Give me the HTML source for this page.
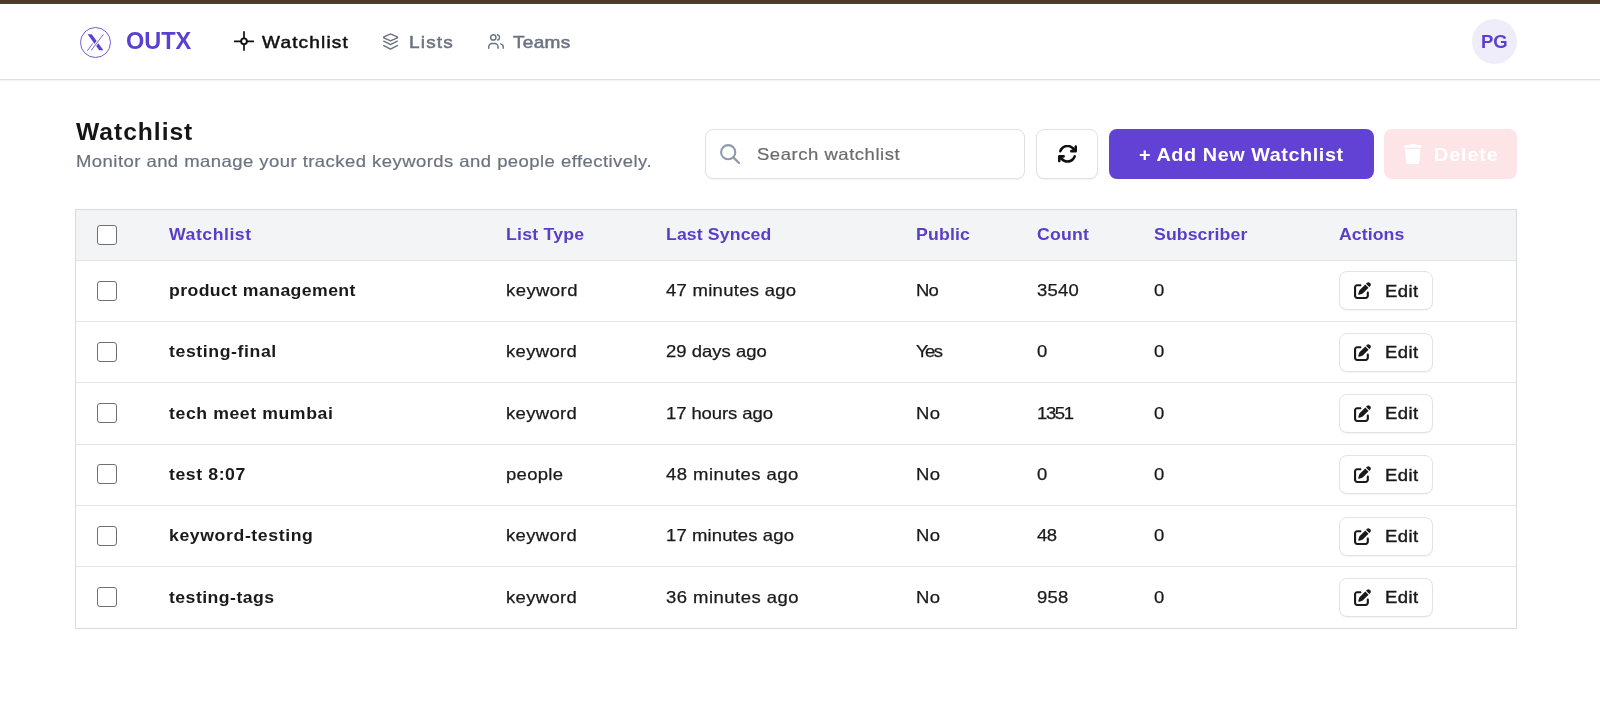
<!DOCTYPE html>
<html><head><meta charset="utf-8"><style>
*{box-sizing:border-box;margin:0;padding:0}
html,body{width:1600px;height:714px;overflow:hidden;background:#fff;font-family:"Liberation Sans",sans-serif;color:#1a1a1a}
.a{position:absolute;white-space:nowrap;line-height:1;will-change:transform}
.topbar{position:absolute;left:0;top:0;width:1600px;height:4px;background:linear-gradient(#533826 0,#523826 50%,#4d3e33 50%,#4d3f34 100%)}
.header{position:absolute;left:0;top:0;width:1600px;height:80px;border-bottom:1px solid #dedede;box-shadow:0 1px 2px rgba(0,0,0,0.06)}
.nav{font-size:17px;font-weight:normal;-webkit-text-stroke:0.5px currentColor}
.th{font-size:16.5px;font-weight:bold;color:#5a3dc8}
.td{font-size:16.5px;color:#1a1a1a;-webkit-text-stroke:0.25px #1a1a1a}
.tdb{font-size:16.5px;font-weight:bold;color:#1a1a1a}
.cb{position:absolute;left:97px;width:20px;height:20px;border:1.5px solid #707070;border-radius:3px;background:#fff}
.edit{position:absolute;left:1339px;width:94px;height:39px;border:1px solid #e3e3e3;border-radius:8px;background:#fff;box-shadow:0 1px 1.5px rgba(0,0,0,0.05)}
.rowline{position:absolute;left:76px;width:1440px;height:1px;background:#e3e4e8}
</style></head><body>
<div class="header"></div><div class="topbar"></div>
<svg class="a" style="left:79.5px;top:26.5px" width="31" height="31" viewBox="0 0 31 31">
<circle cx="15.5" cy="15.5" r="15" fill="none" stroke="#5b3fd0" stroke-width="0.95" opacity="0.9"/>
<path d="M7.6 7.2 L11.8 7.2 L23.4 23.3 L19.2 23.3 Z" fill="#5b3fd0"/>
<path d="M23.4 7.4 L11.2 23.4" stroke="#fff" stroke-width="2.6"/>
<path d="M23.4 7.4 L11.2 23.4 M12.8 16.4 L7.4 23.7" stroke="#5b3fd0" stroke-width="0.8"/>
</svg>
<div id="brand" class="a " style="left:125.5px;top:30.0px;letter-spacing:0px;transform:scaleX(1);transform-origin:0 0;font-size:23.5px;font-weight:bold;color:#5b3fd0">OUTX</div>
<svg class="a" style="left:234px;top:31px" width="20" height="20" viewBox="0 0 20 20"><circle cx="10" cy="10.3" r="2.9" fill="none" stroke="#111" stroke-width="1.9"/><path d="M10 0.3V7.3M10 13.3V19.8M0 10.3H7M13 10.3H20" stroke="#111" stroke-width="1.7"/></svg>
<div id="nav1" class="a nav" style="left:262px;top:33.8px;letter-spacing:1.028px;transform:scaleX(1.12);transform-origin:0 0;color:#111">Watchlist</div>
<svg class="a" style="left:383.3px;top:32.5px" width="16" height="17" viewBox="0 0 16 17"><g fill="none" stroke="#6b7280" stroke-width="1.45" stroke-linecap="round" stroke-linejoin="round"><path d="M7.1 1.05a1 1 0 0 1 .9 0L14.3 3.9a.5 .5 0 0 1 0 .9L8 7.7a1 1 0 0 1-.9 0L.9 4.8a.5 .5 0 0 1 0-.9Z"/><path d="M.8 8.2L7.1 11.4a1 1 0 0 0 .9 0L14.3 8.2"/><path d="M.8 12.6L7.1 15.8a1 1 0 0 0 .9 0L14.3 12.6"/></g></svg>
<div id="nav2" class="a nav" style="left:409px;top:33.8px;letter-spacing:1.045px;transform:scaleX(1.12);transform-origin:0 0;color:#6b7280">Lists</div>
<svg class="a" style="left:488px;top:34px" width="16" height="16" viewBox="0 0 16 16"><g fill="none" stroke="#6b7280" stroke-width="1.45" stroke-linecap="round" stroke-linejoin="round"><circle cx="5.3" cy="3.4" r="2.65"/><path d="M9.6 0.8a2.7 2.7 0 0 1 0 5.2"/><path d="M0.75 14.3V12.9a3.4 3.4 0 0 1 3.4-3.4h2.5a3.4 3.4 0 0 1 3.4 3.4V14.3"/><path d="M12.6 9.9a3 3 0 0 1 2.6 3V14.3"/></g></svg>
<div id="nav3" class="a nav" style="left:513px;top:33.8px;letter-spacing:0.239px;transform:scaleX(1.12);transform-origin:0 0;color:#6b7280">Teams</div>
<div class="a" style="left:1471.8px;top:19px;width:44.5px;height:44.5px;border-radius:50%;background:#efedf9"></div>
<div id="pg" class="a " style="left:1481.1px;top:32.9px;letter-spacing:0px;transform:scaleX(1);transform-origin:0 0;font-size:18.5px;font-weight:bold;color:#5b3fd0">PG</div>
<div id="title" class="a " style="left:76px;top:120.5px;letter-spacing:0.915px;transform:scaleX(1.07);transform-origin:0 0;font-size:23px;font-weight:bold;color:#151515">Watchlist</div>
<div id="sub" class="a " style="left:76px;top:153px;letter-spacing:0.407px;transform:scaleX(1.12);transform-origin:0 0;font-size:16.5px;color:#6b7280;-webkit-text-stroke:0.2px #6b7280">Monitor and manage your tracked keywords and people effectively.</div>
<div class="a" style="left:705px;top:129px;width:320px;height:50px;border:1px solid #e1e1e1;border-radius:8px;background:#fff;box-shadow:0 1px 1.5px rgba(0,0,0,0.05)"></div>
<svg class="a" style="left:719px;top:143px" width="22" height="22" viewBox="0 0 22 22"><circle cx="9.2" cy="9.2" r="7.1" fill="none" stroke="#8e9aab" stroke-width="2.1"/><path d="M14.6 14.6L20 20" stroke="#8e9aab" stroke-width="2.3" stroke-linecap="round"/></svg>
<div id="ph" class="a " style="left:757px;top:146px;letter-spacing:0.48px;transform:scaleX(1.12);transform-origin:0 0;font-size:16.5px;color:#6b6b6b;-webkit-text-stroke:0.2px #6b6b6b">Search watchlist</div>
<div class="a" style="left:1036px;top:129px;width:62px;height:50px;border:1px solid #e1e1e1;border-radius:8px;background:#fff;box-shadow:0 1px 1.5px rgba(0,0,0,0.05)"></div>
<svg class="a" style="left:1057.5px;top:145px" width="19" height="17.5" viewBox="16 40 480 432" preserveAspectRatio="none"><path fill="#111" d="M105.1 202.6c7.7-21.8 20.2-42.3 37.8-59.8c62.5-62.5 163.8-62.5 226.3 0L386.3 160H352c-17.7 0-32 14.3-32 32s14.3 32 32 32H463.5c0 0 0 0 0 0h.4c17.7 0 32-14.3 32-32V80c0-17.7-14.3-32-32-32s-32 14.3-32 32v35.2L414.4 97.6c-87.5-87.5-229.3-87.5-316.8 0C73.2 122 55.6 150.7 44.8 181.4c-5.9 16.7 2.9 34.9 19.5 40.8s34.9-2.9 40.8-19.5zM39 289.3c-5 1.5-9.8 4.200-13.7 8.2c-4 4-6.7 8.8-8.1 14c-.3 1.2-.6 2.5-.8 3.8c-.3 1.7-.4 3.4-.4 5.1V432c0 17.7 14.3 32 32 32s32-14.3 32-32V396.9l17.6 17.5 0 0c87.5 87.4 229.3 87.4 316.7 0c24.4-24.4 42.1-53.1 52.900-83.7c5.9-16.7-2.9-34.9-19.5-40.8s-34.9 2.9-40.8 19.5c-7.7 21.8-20.2 42.3-37.8 59.8c-62.5 62.5-163.8 62.5-226.3 0l-.1-.1L125.6 352H160c17.7 0 32-14.3 32-32s-14.3-32-32-32H48.4c-1.6 0-3.2 .1-4.8 .3s-3.1 .5-4.6 1z"/></svg>
<div class="a" style="left:1108.5px;top:129px;width:264.5px;height:49.5px;border-radius:8px;background:#6142d4"></div>
<div id="add" class="a " style="left:1138.9px;top:145.9px;letter-spacing:0.538px;transform:scaleX(1.07);transform-origin:0 0;font-size:18.5px;font-weight:bold;color:#fff">+ Add New Watchlist</div>
<div class="a" style="left:1383.5px;top:129px;width:133px;height:49.5px;border-radius:8px;background:#fde4e6"></div>
<svg class="a" style="left:1404px;top:144px" width="17.5" height="20" viewBox="0 0 448 512" preserveAspectRatio="none"><path fill="#fff" d="M135.2 17.7L128 32H32C14.3 32 0 46.3 0 64S14.3 96 32 96H416c17.7 0 32-14.3 32-32s-14.3-32-32-32H320l-7.2-14.3C307.4 6.8 296.3 0 284.2 0H163.8c-12.1 0-23.2 6.8-28.6 17.7zM416 128H32L53.2 467c1.6 25.3 22.6 45 47.9 45H346.9c25.3 0 46.3-19.7 47.9-45L416 128z"/></svg>
<div id="del" class="a " style="left:1433.7px;top:145.9px;letter-spacing:0.809px;transform:scaleX(1.07);transform-origin:0 0;font-size:18.5px;font-weight:bold;color:#fff">Delete</div>
<div class="a" style="left:75px;top:209px;width:1442px;height:420px;border:1px solid #d9dbde;background:#fff"></div>
<div class="a" style="left:76px;top:210px;width:1440px;height:50px;background:#f3f4f6"></div>
<div class="rowline" style="top:259.5px;background:#e1e3e7"></div>
<div class="cb" style="top:225px"></div>
<div id="th0" class="a th" style="left:169px;top:226.29999999999998px;letter-spacing:0.494px;transform:scaleX(1.07);transform-origin:0 0;">Watchlist</div>
<div id="th1" class="a th" style="left:506px;top:226.29999999999998px;letter-spacing:0.222px;transform:scaleX(1.07);transform-origin:0 0;">List Type</div>
<div id="th2" class="a th" style="left:666px;top:226.29999999999998px;letter-spacing:0.123px;transform:scaleX(1.07);transform-origin:0 0;">Last Synced</div>
<div id="th3" class="a th" style="left:916px;top:226.29999999999998px;letter-spacing:0.173px;transform:scaleX(1.07);transform-origin:0 0;">Public</div>
<div id="th4" class="a th" style="left:1037px;top:226.29999999999998px;letter-spacing:0.227px;transform:scaleX(1.07);transform-origin:0 0;">Count</div>
<div id="th5" class="a th" style="left:1154px;top:226.29999999999998px;letter-spacing:0.106px;transform:scaleX(1.07);transform-origin:0 0;">Subscriber</div>
<div id="th6" class="a th" style="left:1339px;top:226.29999999999998px;letter-spacing:0.083px;transform:scaleX(1.07);transform-origin:0 0;">Actions</div>
<div class="cb" style="top:280.50px"></div>
<div id="r0c0" class="a tdb" style="left:169px;top:282.0px;letter-spacing:0.38px;transform:scaleX(1.07);transform-origin:0 0;">product management</div>
<div id="r0c1" class="a td" style="left:506px;top:282.0px;letter-spacing:0.394px;transform:scaleX(1.12);transform-origin:0 0;">keyword</div>
<div id="r0c2" class="a td" style="left:666px;top:282.0px;letter-spacing:0.252px;transform:scaleX(1.12);transform-origin:0 0;">47 minutes ago</div>
<div id="r0c3" class="a td" style="left:916px;top:282.0px;letter-spacing:-0.714px;transform:scaleX(1.12);transform-origin:0 0;">No</div>
<div id="r0c4" class="a td" style="left:1037px;top:282.0px;letter-spacing:0.212px;transform:scaleX(1.12);transform-origin:0 0;">3540</div>
<div id="r0c5" class="a td" style="left:1154px;top:282.0px;letter-spacing:0.286px;transform:scaleX(1.12);transform-origin:0 0;">0</div>
<div class="edit" style="top:271.20px"><svg width="17" height="17" viewBox="0 0 512 512" style="position:absolute;left:14px;top:10.3px"><path fill="#1a1a1a" d="M471.6 21.7c-21.9-21.9-57.3-21.9-79.2 0L362.3 51.7l97.9 97.9 30.1-30.1c21.9-21.9 21.9-57.3 0-79.2L471.6 21.7zm-299.2 220c-6.1 6.1-10.8 13.6-13.5 21.9l-29.6 88.8c-2.9 8.6-.6 18.1 5.8 24.6s15.9 8.7 24.6 5.8l88.8-29.6c8.2-2.7 15.7-7.4 21.9-13.5L437.7 172.3 339.7 74.3 172.4 241.7zM96 64C43 64 0 107 0 160V416c0 53 43 96 96 96H352c53 0 96-43 96-96V320c0-17.7-14.3-32-32-32s-32 14.3-32 32v96c0 17.7-14.3 32-32 32H96c-17.7 0-32-14.3-32-32V160c0-17.7 14.3-32 32-32h96c17.7 0 32-14.3 32-32s-14.3-32-32-32H96z"/></svg></div>
<div id="r0e" class="a td" style="left:1385.0px;top:282.6px;letter-spacing:0.394px;transform:scaleX(1.12);transform-origin:0 0;-webkit-text-stroke:0.4px #1a1a1a">Edit</div>
<div class="rowline" style="top:321.13px"></div>
<div class="cb" style="top:341.83px"></div>
<div id="r1c0" class="a tdb" style="left:169px;top:343.33px;letter-spacing:0.561px;transform:scaleX(1.07);transform-origin:0 0;">testing-final</div>
<div id="r1c1" class="a td" style="left:506px;top:343.33px;letter-spacing:0.28593628593604264px;transform:scaleX(1.12);transform-origin:0 0;">keyword</div>
<div id="r1c2" class="a td" style="left:666px;top:343.33px;letter-spacing:0.014px;transform:scaleX(1.12);transform-origin:0 0;">29 days ago</div>
<div id="r1c3" class="a td" style="left:916px;top:343.33px;letter-spacing:-1.377px;transform:scaleX(1.12);transform-origin:0 0;">Yes</div>
<div id="r1c4" class="a td" style="left:1037px;top:343.33px;letter-spacing:0.28593628593604264px;transform:scaleX(1.12);transform-origin:0 0;">0</div>
<div id="r1c5" class="a td" style="left:1154px;top:343.33px;letter-spacing:0.28593628593604264px;transform:scaleX(1.12);transform-origin:0 0;">0</div>
<div class="edit" style="top:332.53px"><svg width="17" height="17" viewBox="0 0 512 512" style="position:absolute;left:14px;top:10.3px"><path fill="#1a1a1a" d="M471.6 21.7c-21.9-21.9-57.3-21.9-79.2 0L362.3 51.7l97.9 97.9 30.1-30.1c21.9-21.9 21.9-57.3 0-79.2L471.6 21.7zm-299.2 220c-6.1 6.1-10.8 13.6-13.5 21.9l-29.6 88.8c-2.9 8.6-.6 18.1 5.8 24.6s15.9 8.7 24.6 5.8l88.8-29.6c8.2-2.7 15.7-7.4 21.9-13.5L437.7 172.3 339.7 74.3 172.4 241.7zM96 64C43 64 0 107 0 160V416c0 53 43 96 96 96H352c53 0 96-43 96-96V320c0-17.7-14.3-32-32-32s-32 14.3-32 32v96c0 17.7-14.3 32-32 32H96c-17.7 0-32-14.3-32-32V160c0-17.7 14.3-32 32-32h96c17.7 0 32-14.3 32-32s-14.3-32-32-32H96z"/></svg></div>
<div id="r1e" class="a td" style="left:1385.0px;top:343.93px;letter-spacing:0.39393939393923605px;transform:scaleX(1.12);transform-origin:0 0;-webkit-text-stroke:0.4px #1a1a1a">Edit</div>
<div class="rowline" style="top:382.46px"></div>
<div class="cb" style="top:403.16px"></div>
<div id="r2c0" class="a tdb" style="left:169px;top:404.66px;letter-spacing:0.55px;transform:scaleX(1.07);transform-origin:0 0;">tech meet mumbai</div>
<div id="r2c1" class="a td" style="left:506px;top:404.66px;letter-spacing:0.28593628593604264px;transform:scaleX(1.12);transform-origin:0 0;">keyword</div>
<div id="r2c2" class="a td" style="left:666px;top:404.66px;letter-spacing:-0.079px;transform:scaleX(1.12);transform-origin:0 0;">17 hours ago</div>
<div id="r2c3" class="a td" style="left:916px;top:404.66px;letter-spacing:0.28593628593604264px;transform:scaleX(1.12);transform-origin:0 0;">No</div>
<div id="r2c4" class="a td" style="left:1037px;top:404.66px;letter-spacing:-1.2px;transform:scaleX(1.12);transform-origin:0 0;">1351</div>
<div id="r2c5" class="a td" style="left:1154px;top:404.66px;letter-spacing:0.28593628593604264px;transform:scaleX(1.12);transform-origin:0 0;">0</div>
<div class="edit" style="top:393.86px"><svg width="17" height="17" viewBox="0 0 512 512" style="position:absolute;left:14px;top:10.3px"><path fill="#1a1a1a" d="M471.6 21.7c-21.9-21.9-57.3-21.9-79.2 0L362.3 51.7l97.9 97.9 30.1-30.1c21.9-21.9 21.9-57.3 0-79.2L471.6 21.7zm-299.2 220c-6.1 6.1-10.8 13.6-13.5 21.9l-29.6 88.8c-2.9 8.6-.6 18.1 5.8 24.6s15.9 8.7 24.6 5.8l88.8-29.6c8.2-2.7 15.7-7.4 21.9-13.5L437.7 172.3 339.7 74.3 172.4 241.7zM96 64C43 64 0 107 0 160V416c0 53 43 96 96 96H352c53 0 96-43 96-96V320c0-17.7-14.3-32-32-32s-32 14.3-32 32v96c0 17.7-14.3 32-32 32H96c-17.7 0-32-14.3-32-32V160c0-17.7 14.3-32 32-32h96c17.7 0 32-14.3 32-32s-14.3-32-32-32H96z"/></svg></div>
<div id="r2e" class="a td" style="left:1385.0px;top:405.26px;letter-spacing:0.39393939393923605px;transform:scaleX(1.12);transform-origin:0 0;-webkit-text-stroke:0.4px #1a1a1a">Edit</div>
<div class="rowline" style="top:443.79px"></div>
<div class="cb" style="top:464.49px"></div>
<div id="r3c0" class="a tdb" style="left:169px;top:465.99px;letter-spacing:0.548px;transform:scaleX(1.07);transform-origin:0 0;">test 8:07</div>
<div id="r3c1" class="a td" style="left:506px;top:465.99px;letter-spacing:0.276px;transform:scaleX(1.12);transform-origin:0 0;">people</div>
<div id="r3c2" class="a td" style="left:666px;top:465.99px;letter-spacing:0.4px;transform:scaleX(1.12);transform-origin:0 0;">48 minutes ago</div>
<div id="r3c3" class="a td" style="left:916px;top:465.99px;letter-spacing:0.28593628593604264px;transform:scaleX(1.12);transform-origin:0 0;">No</div>
<div id="r3c4" class="a td" style="left:1037px;top:465.99px;letter-spacing:0.28593628593604264px;transform:scaleX(1.12);transform-origin:0 0;">0</div>
<div id="r3c5" class="a td" style="left:1154px;top:465.99px;letter-spacing:0.28593628593604264px;transform:scaleX(1.12);transform-origin:0 0;">0</div>
<div class="edit" style="top:455.19px"><svg width="17" height="17" viewBox="0 0 512 512" style="position:absolute;left:14px;top:10.3px"><path fill="#1a1a1a" d="M471.6 21.7c-21.9-21.9-57.3-21.9-79.2 0L362.3 51.7l97.9 97.9 30.1-30.1c21.9-21.9 21.9-57.3 0-79.2L471.6 21.7zm-299.2 220c-6.1 6.1-10.8 13.6-13.5 21.9l-29.6 88.8c-2.9 8.6-.6 18.1 5.8 24.6s15.9 8.7 24.6 5.8l88.8-29.6c8.2-2.7 15.7-7.4 21.9-13.5L437.7 172.3 339.7 74.3 172.4 241.7zM96 64C43 64 0 107 0 160V416c0 53 43 96 96 96H352c53 0 96-43 96-96V320c0-17.7-14.3-32-32-32s-32 14.3-32 32v96c0 17.7-14.3 32-32 32H96c-17.7 0-32-14.3-32-32V160c0-17.7 14.3-32 32-32h96c17.7 0 32-14.3 32-32s-14.3-32-32-32H96z"/></svg></div>
<div id="r3e" class="a td" style="left:1385.0px;top:466.59px;letter-spacing:0.39393939393923605px;transform:scaleX(1.12);transform-origin:0 0;-webkit-text-stroke:0.4px #1a1a1a">Edit</div>
<div class="rowline" style="top:505.12px"></div>
<div class="cb" style="top:525.82px"></div>
<div id="r4c0" class="a tdb" style="left:169px;top:527.32px;letter-spacing:0.568px;transform:scaleX(1.07);transform-origin:0 0;">keyword-testing</div>
<div id="r4c1" class="a td" style="left:506px;top:527.32px;letter-spacing:0.28593628593604264px;transform:scaleX(1.12);transform-origin:0 0;">keyword</div>
<div id="r4c2" class="a td" style="left:666px;top:527.32px;letter-spacing:0.108px;transform:scaleX(1.12);transform-origin:0 0;">17 minutes ago</div>
<div id="r4c3" class="a td" style="left:916px;top:527.32px;letter-spacing:0.28593628593604264px;transform:scaleX(1.12);transform-origin:0 0;">No</div>
<div id="r4c4" class="a td" style="left:1037px;top:527.32px;letter-spacing:-0.4px;transform:scaleX(1.12);transform-origin:0 0;">48</div>
<div id="r4c5" class="a td" style="left:1154px;top:527.32px;letter-spacing:0.28593628593604264px;transform:scaleX(1.12);transform-origin:0 0;">0</div>
<div class="edit" style="top:516.52px"><svg width="17" height="17" viewBox="0 0 512 512" style="position:absolute;left:14px;top:10.3px"><path fill="#1a1a1a" d="M471.6 21.7c-21.9-21.9-57.3-21.9-79.2 0L362.3 51.7l97.9 97.9 30.1-30.1c21.9-21.9 21.9-57.3 0-79.2L471.6 21.7zm-299.2 220c-6.1 6.1-10.8 13.6-13.5 21.9l-29.6 88.8c-2.9 8.6-.6 18.1 5.8 24.6s15.9 8.7 24.6 5.8l88.8-29.6c8.2-2.7 15.7-7.4 21.9-13.5L437.7 172.3 339.7 74.3 172.4 241.7zM96 64C43 64 0 107 0 160V416c0 53 43 96 96 96H352c53 0 96-43 96-96V320c0-17.7-14.3-32-32-32s-32 14.3-32 32v96c0 17.7-14.3 32-32 32H96c-17.7 0-32-14.3-32-32V160c0-17.7 14.3-32 32-32h96c17.7 0 32-14.3 32-32s-14.3-32-32-32H96z"/></svg></div>
<div id="r4e" class="a td" style="left:1385.0px;top:527.92px;letter-spacing:0.39393939393923605px;transform:scaleX(1.12);transform-origin:0 0;-webkit-text-stroke:0.4px #1a1a1a">Edit</div>
<div class="rowline" style="top:566.45px"></div>
<div class="cb" style="top:587.15px"></div>
<div id="r5c0" class="a tdb" style="left:169px;top:588.65px;letter-spacing:0.426px;transform:scaleX(1.07);transform-origin:0 0;">testing-tags</div>
<div id="r5c1" class="a td" style="left:506px;top:588.65px;letter-spacing:0.28593628593604264px;transform:scaleX(1.12);transform-origin:0 0;">keyword</div>
<div id="r5c2" class="a td" style="left:666px;top:588.65px;letter-spacing:0.42px;transform:scaleX(1.12);transform-origin:0 0;">36 minutes ago</div>
<div id="r5c3" class="a td" style="left:916px;top:588.65px;letter-spacing:0.28593628593604264px;transform:scaleX(1.12);transform-origin:0 0;">No</div>
<div id="r5c4" class="a td" style="left:1037px;top:588.65px;letter-spacing:0.182px;transform:scaleX(1.12);transform-origin:0 0;">958</div>
<div id="r5c5" class="a td" style="left:1154px;top:588.65px;letter-spacing:0.28593628593604264px;transform:scaleX(1.12);transform-origin:0 0;">0</div>
<div class="edit" style="top:577.85px"><svg width="17" height="17" viewBox="0 0 512 512" style="position:absolute;left:14px;top:10.3px"><path fill="#1a1a1a" d="M471.6 21.7c-21.9-21.9-57.3-21.9-79.2 0L362.3 51.7l97.9 97.9 30.1-30.1c21.9-21.9 21.9-57.3 0-79.2L471.6 21.7zm-299.2 220c-6.1 6.1-10.8 13.6-13.5 21.9l-29.6 88.8c-2.9 8.6-.6 18.1 5.8 24.6s15.9 8.7 24.6 5.8l88.8-29.6c8.2-2.7 15.7-7.4 21.9-13.5L437.7 172.3 339.7 74.3 172.4 241.7zM96 64C43 64 0 107 0 160V416c0 53 43 96 96 96H352c53 0 96-43 96-96V320c0-17.7-14.3-32-32-32s-32 14.3-32 32v96c0 17.7-14.3 32-32 32H96c-17.7 0-32-14.3-32-32V160c0-17.7 14.3-32 32-32h96c17.7 0 32-14.3 32-32s-14.3-32-32-32H96z"/></svg></div>
<div id="r5e" class="a td" style="left:1385.0px;top:589.25px;letter-spacing:0.39393939393923605px;transform:scaleX(1.12);transform-origin:0 0;-webkit-text-stroke:0.4px #1a1a1a">Edit</div>
</body></html>
